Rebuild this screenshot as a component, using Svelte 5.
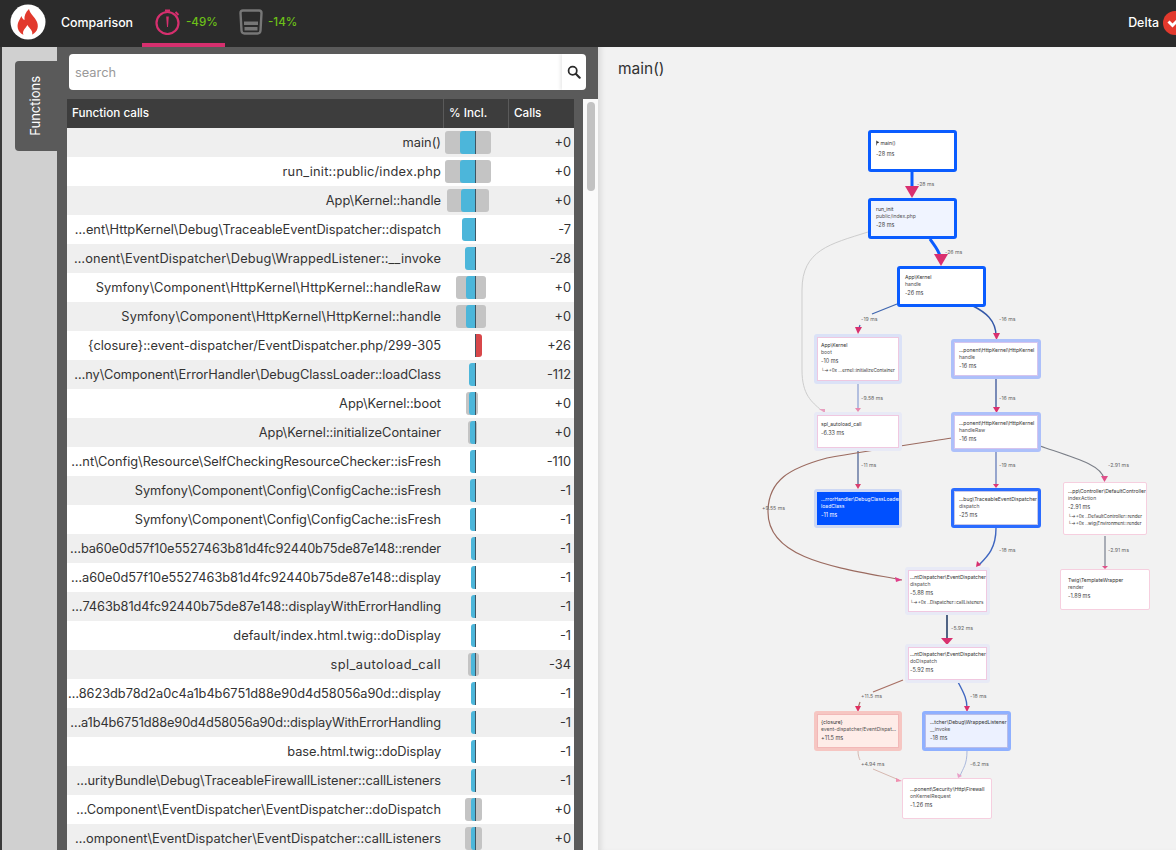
<script>
  // [name, calls, gray range, bar range, over budget, letter-spacing that fits the column]
  const rows = [
    ['main()', '+0', [445, 491], [460, 476]],
    ['run_init::public/index.php', '+0', [445, 491], [460, 476], false, 0.23],
    ['App\\Kernel::handle', '+0', [447, 489], [461, 476]],
    ['…ent\\HttpKernel\\Debug\\TraceableEventDispatcher::dispatch', '-7', null, [462, 476]],
    ['…onent\\EventDispatcher\\Debug\\WrappedListener::__invoke', '-28', null, [465, 476], false, 0.127],
    ['Symfony\\Component\\HttpKernel\\HttpKernel::handleRaw', '+0', [456, 486], [466, 476], false, 0.118],
    ['Symfony\\Component\\HttpKernel\\HttpKernel::handle', '+0', [456, 486], [466, 476], false, 0.128],
    ['{closure}::event-dispatcher/EventDispatcher.php/299-305', '+26', null, [475, 482], true],
    ['…ny\\Component\\ErrorHandler\\DebugClassLoader::loadClass', '-112', null, [469, 476], false, -0.037],
    ['App\\Kernel::boot', '+0', [466, 478], [469, 476]],
    ['App\\Kernel::initializeContainer', '+0', [468, 477], [470, 476]],
    ['…nt\\Config\\Resource\\SelfCheckingResourceChecker::isFresh', '-110', null, [470, 476], false, -0.036],
    ['Symfony\\Component\\Config\\ConfigCache::isFresh', '-1', null, [470, 476]],
    ['Symfony\\Component\\Config\\ConfigCache::isFresh', '-1', null, [470, 476]],
    ['…ba60e0d57f10e5527463b81d4fc92440b75de87e148::render', '-1', null, [471, 476], false, -0.115],
    ['…a60e0d57f10e5527463b81d4fc92440b75de87e148::display', '-1', null, [471, 476], false, -0.04],
    ['…7463b81d4fc92440b75de87e148::displayWithErrorHandling', '-1', null, [471, 476], false, -0.06],
    ['default/index.html.twig::doDisplay', '-1', null, [471, 476], false, 0.06],
    ['spl_autoload_call', '-34', [468, 479], [471, 476], false, 0.47],
    ['…8623db78d2a0c4a1b4b6751d88e90d4d58056a90d::display', '-1', null, [471, 476], false, -0.04],
    ['…a1b4b6751d88e90d4d58056a90d::displayWithErrorHandling', '-1', null, [471, 476], false, -0.13],
    ['base.html.twig::doDisplay', '-1', null, [471, 476], false, -0.08],
    ['…urityBundle\\Debug\\TraceableFirewallListener::callListeners', '-1', null, [471, 476], false, -0.035],
    ['…Component\\EventDispatcher\\EventDispatcher::doDispatch', '+0', [465, 482], [471, 476]],
    ['…omponent\\EventDispatcher\\EventDispatcher::callListeners', '+0', [465, 482], [471, 476], false, 0.05]
  ];

  const nodes = [
    { x: 868, y: 130, w: 89, h: 42, kind: 'strong', flag: true, lines: ['main()'], ms: '-28 ms' },
    { x: 868, y: 198, w: 89, h: 41, kind: 'strong tint', lines: ['run_init', 'public/index.php'], ms: '-28 ms' },
    { x: 897, y: 266, w: 89, h: 41, kind: 'strong', lines: ['App\\Kernel', 'handle'], ms: '-26 ms' },
    { x: 814, y: 334, w: 88, h: 50, kind: 'pale', lines: ['App\\Kernel', 'boot'], ms: '-10 ms', extra: ['└→+0x …ernel::initializeContainer'] },
    { x: 951, y: 339, w: 90, h: 40, kind: 'mid', lines: ['…ponent\\HttpKernel\\HttpKernel', 'handle'], ms: '-16 ms' },
    { x: 814, y: 412, w: 88, h: 39, kind: 'faint', lines: ['spl_autoload_call'], ms: '-6.33 ms' },
    { x: 951, y: 412, w: 90, h: 40, kind: 'mid', lines: ['…ponent\\HttpKernel\\HttpKernel', 'handleRaw'], ms: '-16 ms' },
    { x: 814, y: 489, w: 88, h: 39, kind: 'solid', lines: ['…rrorHandler\\DebugClassLoader', 'loadClass'], ms: '-11 ms' },
    { x: 951, y: 488, w: 90, h: 40, kind: 'strong soft', lines: ['…bug\\TraceableEventDispatcher', 'dispatch'], ms: '-25 ms' },
    { x: 1063, y: 482, w: 84, h: 53, kind: 'thin', lines: ['…pp\\Controller\\DefaultController', 'indexAction'], ms: '-2.91 ms', extra: ['└→+0x ..DefaultController::render', '└→+0x ..wig\\Environment::render'] },
    { x: 1060, y: 569, w: 90, h: 41, kind: 'thin', lines: ['Twig\\TemplateWrapper', 'render'], ms: '-1.89 ms' },
    { x: 905, y: 567, w: 85, h: 48, kind: 'faint', lines: ['…ntDispatcher\\EventDispatcher', 'dispatch'], ms: '-5.88 ms', extra: ['└→+0x ..Dispatcher::callListeners'] },
    { x: 905, y: 644, w: 85, h: 39, kind: 'faint', lines: ['…ntDispatcher\\EventDispatcher', 'doDispatch'], ms: '-5.92 ms' },
    { x: 814, y: 711, w: 88, h: 40, kind: 'red', lines: ['{closure}', 'event-dispatcher/EventDispat…'], ms: '+11.5 ms' },
    { x: 922, y: 711, w: 89, h: 40, kind: 'periwinkle', lines: ['…tcher\\Debug\\WrappedListener', '__invoke'], ms: '-18 ms' },
    { x: 902, y: 778, w: 90, h: 41, kind: 'thin', lines: ['…ponent\\Security\\Http\\Firewall', 'onKernelRequest'], ms: '-1.26 ms' }
  ];

  function inset(n) {
    const fromEdge = n.w >= 89 ? 8 : n.w === 88 ? 7 : 5;
    return fromEdge - (n.kind === 'thin' ? 1 : 3);
  }

  const edges = [
    { d: 'M912 172 L912 190', c: '#0a5cff', w: 3 },
    { d: 'M930 239 C934 245 938 249 940 256', c: '#0a5cff', w: 3 },
    { d: 'M868 232 C830 244 802 250 802 290 L802 370 C802 395 812 402 821 410', c: '#cdcdcd', w: 1 },
    { d: 'M897 304 L872 314', c: '#3f66b0', w: 1.2 },
    { d: 'M860 325 L858 331', c: '#3f66b0', w: 1.2 },
    { d: 'M973 306 C985 312 996 320 996 336', c: '#3458a8', w: 1.4 },
    { d: 'M858 384 L858 409', c: '#a3b2da', w: 1.6 },
    { d: 'M996 379 L996 408', c: '#5a70a8', w: 1.6 },
    { d: 'M858 451 L858 486', c: '#6f80a8', w: 1.6 },
    { d: 'M996 452 L996 485', c: '#7f92c4', w: 1.6 },
    { d: 'M952 438 C900 446 860 452 827 458 C790 468 768 480 768 512 C768 560 840 568 902 580', c: '#9b6b60', w: 1.2 },
    { d: 'M1040 446 C1075 458 1102 465 1104 479', c: '#7b7f88', w: 1.1 },
    { d: 'M996 528 C996 548 988 556 979 565', c: '#3f66c0', w: 1.4 },
    { d: 'M1105 536 L1105 566', c: '#a9adb6', w: 2 },
    { d: 'M947 615 L947 638', c: '#3f5478', w: 1.8 },
    { d: 'M903 680 L873 692', c: '#a87064', w: 1.2 },
    { d: 'M860 702 L858 708', c: '#a87064', w: 1.2 },
    { d: 'M958 682 C965 695 967 700 967 708', c: '#3f66c0', w: 1.4 },
    { d: 'M858 751 C858 755 859 758 860 760', c: '#d6b8b0', w: 1 },
    { d: 'M873 769 L899 780', c: '#d6b8b0', w: 1 },
    { d: 'M967 751 C967 765 963 768 960 776', c: '#aab8dc', w: 1 }
  ];

  const arrows = [
    ['905,186 919,186 912,198', '#d9306f'],
    ['934,254 948,254 941,266', '#d9306f'],
    ['855,327 862,327 858,334', '#d9306f'],
    ['993,333 1000,333 996.5,340', '#d9306f'],
    ['819,409 825,409 825,413', '#e8a0c0'],
    ['855,408 861,408 858,412', '#e88ab0'],
    ['993,407 1000,407 996.5,413', '#d9306f'],
    ['855,484 861,484 858,489', '#d9406f'],
    ['993,484 999,484 996,488', '#e03878'],
    ['1101,476 1108,476 1104.5,482', '#e0508a'],
    ['1102,566 1108,566 1105,569', '#e0508a'],
    ['895,577 902,580 896,582', '#e0408a'],
    ['977,561 981,565 976,567', '#d9306f'],
    ['941,638 953,638 947,645', '#d9306f'],
    ['855,706 861,706 858,712', '#e03060'],
    ['964,706 970,706 967,712', '#d9306f'],
    ['896,778 902,781 896,782', '#f090b0'],
    ['957,773 962,776 958,778', '#e8a0c8']
  ];

  const labels = [
    [917, 185.5, '-28 ms'], [945, 254, '-26 ms'], [861, 321, '-19 ms'], [999, 321, '-16 ms'],
    [861, 400, '-9.58 ms'], [999, 400, '-16 ms'], [861, 467, '-11 ms'], [999, 467, '-19 ms'],
    [762, 510, '+9.55 ms'], [1108, 467, '-2.91 ms'], [999, 552, '-18 ms'], [1108, 552, '-2.91 ms'],
    [951, 630, '-5.92 ms'], [861, 698, '+11.5 ms'], [970, 698, '-18 ms'], [861, 766, '+4.94 ms'], [970, 766, '-6.2 ms']
  ];
</script>

<div class="page">
  <header class="topbar">
    <svg class="logo" viewBox="0 0 36 36" aria-hidden="true">
      <circle cx="18" cy="18" r="17.5" fill="#fff" />
      <path d="M19 5 C20 10 25 13 27 18 C29.500 24 26 30 20 31 L15 31 C9 30 6.500 24 8 19 C9 16 10.500 14 11.500 12 C12 14 13 15.500 14.500 16 C14 12 15.500 8 19 5 Z" fill="#e2392d" />
      <path d="M13.500 31 C12 27 14.500 25.500 17.500 21 C19.500 25 23.500 26.500 22 31 Z" fill="#fff" />
    </svg>
    <span class="title">Comparison</span>
    <div class="metric active">
      <svg class="icon" viewBox="0 0 26 26" aria-hidden="true">
        <circle cx="12.500" cy="14" r="11" fill="none" stroke="#d62f6e" stroke-width="2.200" />
        <path d="M10 1.500 H15 M20.500 3 L23.500 6" fill="none" stroke="#d62f6e" stroke-width="2" />
        <path d="M11.200 7.500 H13.800 L13 18 H12 Z" fill="#d62f6e" />
      </svg>
      <span>-49%</span>
    </div>
    <div class="metric second">
      <svg class="icon glass" viewBox="0 0 24 26" aria-hidden="true">
        <path d="M1.500 4 Q1.500 1.500 4 1.500 H20 Q22.500 1.500 22.500 4 L21.500 21.500 Q21.300 24.500 18.500 24.500 H5.500 Q2.700 24.500 2.500 21.500 Z" fill="none" stroke="#777" stroke-width="2.400" />
        <rect x="5" y="12.500" width="14" height="3.500" fill="#777" />
        <rect x="5.500" y="18" width="13" height="3.500" fill="#777" />
      </svg>
      <span>-14%</span>
    </div>
    <div class="delta">
      <span>Delta</span>
      <svg class="check" viewBox="0 0 24 24" aria-hidden="true">
        <circle cx="12" cy="12" r="12" fill="#e2392d" />
        <path d="M5.500 10.500 L9.500 14.500 L16 8" fill="none" stroke="#fff" stroke-width="3" />
      </svg>
    </div>
  </header>

  <div class="body">
    <aside class="rail">
      <div class="tab"><span>Functions</span></div>
    </aside>

    <section class="panel">
      <div class="search">
        <div class="search-field">search</div>
        <div class="search-btn">
          <svg viewBox="0 0 16 16" aria-hidden="true">
            <circle cx="6.500" cy="6.500" r="4.700" fill="none" stroke="#2b2b2b" stroke-width="2" />
            <path d="M10 10 L14.500 14.500" stroke="#2b2b2b" stroke-width="2.400" stroke-linecap="round" />
          </svg>
        </div>
      </div>
      <div class="table-wrap">
        <div class="table">
          <div class="thead">
            <div class="th">Function calls</div>
            <div class="th">% Incl.</div>
            <div class="th">Calls</div>
          </div>
          {#each rows as r}
            <div class="row">
              <div class="name" style="letter-spacing:{r[5] || 0}px">{r[0]}</div>
              <div class="bars">
                {#if r[2]}
                  <div class="bar gray" style="left:{r[2][0] - 443}px;width:{r[2][1] - r[2][0]}px"></div>
                {/if}
                <div class="bar" class:over={r[4]} class:blue={!r[4]} style="left:{r[3][0] - 443}px;width:{r[3][1] - r[3][0]}px"></div>
                <div class="axis"></div>
              </div>
              <div class="calls">{r[1]}</div>
            </div>
          {/each}
        </div>
        <div class="scrollbar"><div class="thumb"></div></div>
      </div>
    </section>

    <main class="graph">
      <h1>main()</h1>
      <svg class="edges" viewBox="598 47 578 803" width="578" height="803" aria-hidden="true">
        {#each edges as e}
          <path d={e.d} fill="none" stroke={e.c} stroke-width={e.w} />
        {/each}
        {#each arrows as a}
          <polygon points={a[0]} fill={a[1]} />
        {/each}
        {#each labels as l}
          <text x={l[0]} y={l[1]} class="edge-label">{l[2]}</text>
        {/each}
      </svg>
      {#each nodes as n}
        <div
          class="node {n.kind}"
          class:single={n.lines.length === 1}
          class:flagged={n.flag}
          style="left:{n.x - 598}px;top:{n.y - 47}px;width:{n.w}px;height:{n.h}px;padding-left:{inset(n)}px"
        >
          {#each n.lines as line, i}
            <div class="line" class:sub={i === 1}>
              {#if n.flag}<svg class="flag" viewBox="0 0 6 7" aria-hidden="true"><path d="M0.500 0 V7" stroke="#222" stroke-width="1" /><path d="M1 0.500 L5 2.500 L1 4.500 Z" fill="#333" /></svg>{/if}{line}
            </div>
          {/each}
          <div class="ms">{n.ms}</div>
          {#if n.extra}
            {#each n.extra as x}
              <div class="line extra">{x}</div>
            {/each}
          {/if}
        </div>
      {/each}
    </main>
  </div>
</div>

<style>
  :global(body) {
    margin: 0;
    overflow: hidden;
    font-family: Inter, "Liberation Sans", sans-serif;
  }
  .page {
    width: 1176px;
    height: 850px;
    overflow: hidden;
    display: flex;
    flex-direction: column;
    color: #333;
  }
  .topbar {
    height: 47px;
    flex: none;
    display: flex;
    align-items: center;
    background: #2b2b2b;
    color: #fff;
    font-size: 12.400px;
    font-weight: 500;
    padding-left: 10px;
    overflow: hidden;
  }
  .logo { width: 36px; height: 36px; flex: none; margin-top: -4px; }
  .title { margin-left: 15px; margin-top: -3px; width: 81px; }
  .metric {
    height: 47px;
    box-sizing: border-box;
    display: flex;
    align-items: center;
    gap: 5px;
    color: #6cc018;
    font-size: 11.600px;
    padding-bottom: 4px;
  }
  .metric.active {
    width: 83px;
    padding-left: 13px;
    border-bottom: 4px solid #d62f6e;
    padding-bottom: 0;
  }
  .metric.second { padding-left: 14px; }
  .icon { width: 26px; height: 26px; flex: none; }
  .icon.glass { width: 24px; }
  .delta {
    margin-left: auto;
    display: flex;
    align-items: center;
    gap: 4px;
    margin-right: -11px;
    margin-top: -2px;
  }
  .check { width: 24px; height: 24px; flex: none; }

  .body { flex: 1; display: flex; min-height: 0; }
  .rail {
    flex: none;
    background: #d0d0d0;
    border-left: 2px solid #3a3a3a;
    padding: 14px 0 0 13px;
    box-sizing: content-box;
    width: 42px;
  }
  .tab {
    width: 42px;
    height: 90px;
    background: #5a5a5a;
    border-radius: 4px 0 0 4px;
    color: #fff;
    font-size: 13px;
    display: flex;
    align-items: center;
    justify-content: center;
    padding-right: 3px;
    box-sizing: border-box;
  }
  .tab span { writing-mode: vertical-rl; transform: rotate(180deg); }

  .panel {
    width: 541px;
    flex: none;
    background: #5a5a5a;
    padding: 7px 0 0 10px;
    box-sizing: border-box;
    overflow: hidden;
  }
  .search {
    margin-left: 2px;
    width: 517px;
    height: 36px;
    display: flex;
    background: #fff;
    border-radius: 4px;
    overflow: hidden;
  }
  .search-field {
    flex: 1;
    padding-left: 6px;
    line-height: 38px;
    font-size: 12.800px;
    color: #999;
  }
  .search-btn {
    width: 24px;
    display: flex;
    align-items: center;
    justify-content: center;
    box-shadow: -2px 0 3px rgba(0, 0, 0, 0.08);
  }
  .search-btn svg { width: 14px; height: 14px; }
  .table-wrap { display: flex; margin-top: 9px; width: 531px; gap: 9px; }
  .table { width: 507px; flex: none; }
  .thead, .row {
    display: grid;
    grid-template-columns: 376px 65px 66px;
  }
  .thead {
    height: 29px;
    background: #3d3d3d;
    color: #fff;
    font-size: 11.700px;
    font-weight: 500;
    line-height: 29px;
  }
  .th { padding-left: 5px; border-left: 1px solid #5a5a5a; box-sizing: border-box; }
  .th:first-child { border-left: 0; }
  .row {
    height: 29px;
    background: #fff;
    font-size: 12.800px;
    line-height: 29px;
    color: #333;
  }
  .row:nth-child(even) { background: #efefef; }
  .name {
    text-align: right;
    padding-right: 2px;
    white-space: nowrap;
  }
  .calls { text-align: right; padding-right: 3px; }
  .bars { position: relative; }
  .bar {
    position: absolute;
    top: 3px;
    height: 23px;
    border-radius: 3px;
  }
  .gray { background: #c4c4c4; }
  .blue { background: #4cb6da; border-radius: 3px 0 0 3px; }
  .over { background: #d8474a; border-radius: 0 3px 3px 0; }
  .axis {
    position: absolute;
    left: 32px;
    top: 3px;
    width: 1px;
    height: 23px;
    background: #3f5563;
  }
  .scrollbar {
    width: 15px;
    flex: none;
    height: 760px;
    background: #fafafa;
    padding: 3px 0 0 4px;
    box-sizing: border-box;
  }
  .thumb { width: 8px; height: 89px; border-radius: 4px; background: #c2c2c2; }

  .graph {
    flex: 1;
    position: relative;
    background: #f2f2f2;
    box-shadow: inset 6px 0 6px -4px rgba(0, 0, 0, 0.12);
    overflow: hidden;
  }
  h1 {
    margin: 12px 0 0 20px;
    font-size: 15.500px;
    line-height: 20px;
    font-weight: 400;
    color: #333;
  }
  .edges { position: absolute; left: 0; top: 0; }
  .edge-label { font-size: 5.200px; fill: #666; }
  .node {
    position: absolute;
    box-sizing: border-box;
    display: flex;
    flex-direction: column;
    justify-content: center;
    padding-bottom: 2px;
    background: #fff;
    color: #333;
    font-size: 5.050px;
    line-height: 7px;
    white-space: nowrap;
    overflow: hidden;
  }
  .node.single { padding-bottom: 5px; }
  .node.flagged .ms { margin-top: 4px; }
  .line.sub { color: #555; }
  .line.extra { font-size: 4.600px; }
  .ms { margin: 2px 0 0; font-size: 5.500px; color: #444; }
  .ms + .line { margin-top: 2px; }
  .flag { width: 4px; height: 6px; margin-right: 0.500px; vertical-align: -1px; }
  .strong { border: 3px solid #0a5cff; border-radius: 3px; }
  .strong.tint { background: #f0f4ff; }
  .strong.soft { border-color: #2b6cff; box-shadow: inset 0 0 0 1px #c7c7e8; }
  .mid { border: 3px solid #adc0fa; border-radius: 3px; box-shadow: inset 0 0 0 1px #d5c4ee; }
  .pale { border: 3px solid #dbe2f7; border-radius: 3px; box-shadow: inset 0 0 0 1px #eec8e0; }
  .faint { border: 3px solid #e8eaf6; border-radius: 3px; box-shadow: inset 0 0 0 1px #f0c8e0; }
  .solid { border: 3px solid #cdd8f4; border-radius: 3px; background: #0050ff; color: #fff; }
  .solid .line, .solid .ms { color: #fff; }
  .thin { border: 1px solid #f6cfdf; border-radius: 2px; }
  .node.red { border: 3px solid #f6c6c2; border-radius: 3px; background: #feece8; box-shadow: inset 0 0 0 1px #f2b8b8; }
  .periwinkle { border: 3px solid #8fb0ff; border-radius: 3px; background: #ecf1ff; box-shadow: inset 0 0 0 1px #b8bce8; }
</style>
